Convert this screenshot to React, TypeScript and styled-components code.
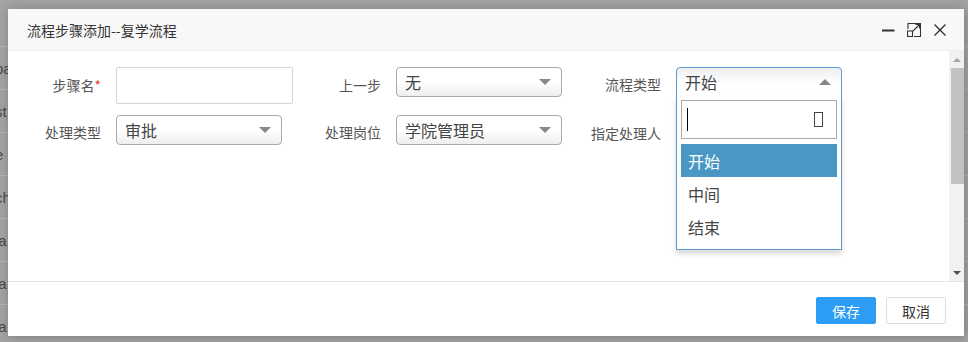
import React from "react";
import styled, { createGlobalStyle } from "styled-components";

const GlobalStyle = createGlobalStyle`
  html, body {
    margin: 0;
    padding: 0;
    background: #a3a3a3;
  }
  * {
    box-sizing: border-box;
  }
`;

const CJK = `"Noto Sans CJK SC", "Liberation Sans", sans-serif`;

const Page = styled.div`
  position: relative;
  width: 968px;
  height: 342px;
  overflow: hidden;
  background: #a3a3a3;
  font-family: ${CJK};
`;

const BackTable = styled.div`
  display: flex;
  flex-direction: column;
  padding-top: 4px;
`;

const BackRow = styled.div`
  height: 43px;
  border-bottom: 1px solid #b4b4b4;
  display: flex;
  align-items: center;
  padding-top: 0;
  font-family: "Liberation Sans", sans-serif;
  font-size: 15px;
  color: #4a4a4a;
`;

const BackText = styled.span`
  margin-left: -5px;
`;

const Dialog = styled.div`
  position: absolute;
  left: 8px;
  top: 9px;
  width: 956px;
  height: 327px;
  background: #fff;
  display: flex;
  flex-direction: column;
  box-shadow: 1px 1px 10px rgba(0, 0, 0, 0.25);
`;

const Header = styled.div`
  height: 42px;
  flex: none;
  display: flex;
  align-items: center;
  padding: 0 17px 0 19px;
  background: #f8f8f8;
  border-bottom: 1px solid #eee;
`;

const Title = styled.div`
  flex: 1;
  font-size: 14px;
  color: #333;
`;

const HeaderTools = styled.div`
  display: flex;
  align-items: center;
  gap: 12px;
`;

const ToolIcon = styled.svg`
  width: 14px;
  height: 14px;
  display: block;
  stroke: #333;
  fill: none;
`;

const Body = styled.div`
  height: 230px;
  flex: none;
  display: flex;
`;

const FormArea = styled.div`
  flex: 1;
  padding: 16px 0 0 8px;
`;

const FormGrid = styled.div`
  display: grid;
  grid-template-columns: repeat(3, 280px);
  row-gap: 11px;
  align-items: start;
`;

const Field = styled.div`
  display: flex;
  align-items: flex-start;
`;

const Label = styled.label<{ $h: number }>`
  width: 85px;
  margin-right: 15px;
  flex: none;
  text-align: right;
  font-size: 14px;
  line-height: ${({ $h }) => $h}px;
  color: #555;
  white-space: nowrap;
`;

const Required = styled.span`
  color: #e4393c;
`;

const TextInput = styled.div`
  width: 177px;
  height: 37px;
  border: 1px solid #d4d4d4;
  border-radius: 2px;
  background: #fff;
`;

const SelectBox = styled.div<{ $open?: boolean }>`
  position: relative;
  width: 166px;
  height: 30px;
  display: flex;
  align-items: center;
  padding: 0 10px 0 8px;
  border: 1px solid ${({ $open }) => ($open ? "#5d9bd0" : "#aaa")};
  border-radius: ${({ $open }) => ($open ? "4px 4px 0 0" : "4px")};
  background: ${({ $open }) =>
    $open
      ? "linear-gradient(to bottom, #eee 0%, #fff 55%)"
      : "linear-gradient(to bottom, #fff 50%, #eee 100%)"};
  font-size: 16px;
  color: #444;
`;

const SelectValue = styled.span`
  flex: 1;
  white-space: nowrap;
`;

const Caret = styled.span<{ $up?: boolean }>`
  width: 0;
  height: 0;
  border-left: 6px solid transparent;
  border-right: 6px solid transparent;
  ${({ $up }) =>
    $up ? "border-bottom: 6px solid #888;" : "border-top: 6px solid #888;"}
`;

const DropPanel = styled.div`
  position: absolute;
  top: 100%;
  left: -1px;
  right: -1px;
  background: #fff;
  border: 1px solid #5d9bd0;
  border-top: none;
  padding: 4px 4px 6px;
  box-shadow: 0 4px 5px rgba(0, 0, 0, 0.15);
  z-index: 2;
`;

const SearchBox = styled.div`
  height: 39px;
  border: 1px solid #aaa;
  display: flex;
  align-items: center;
  padding: 0 13px 0 5px;
  margin-bottom: 5px;
`;

const Cursor = styled.span`
  width: 1px;
  height: 23px;
  background: #000;
`;

const Tofu = styled.span`
  margin-left: auto;
  width: 9px;
  height: 15px;
  border: 1px solid #444;
`;

const Option = styled.div<{ $active?: boolean }>`
  height: 33px;
  display: flex;
  align-items: center;
  padding-left: 7px;
  font-size: 16px;
  color: ${({ $active }) => ($active ? "#fff" : "#444")};
  background: ${({ $active }) => ($active ? "#4a97c6" : "transparent")};
`;

const Scrollbar = styled.div`
  width: 15px;
  flex: none;
  background: #f1f1f1;
  display: flex;
  flex-direction: column;
  align-items: center;
`;

const ScrollArrow = styled.div<{ $down?: boolean }>`
  height: 17px;
  width: 100%;
  display: flex;
  align-items: center;
  justify-content: center;
  &::after {
    content: "";
    width: 0;
    height: 0;
    border-left: 4px solid transparent;
    border-right: 4px solid transparent;
    ${({ $down }) =>
      $down ? "border-top: 4px solid #505050;" : "border-bottom: 4px solid #a3a3a3;"}
  }
`;

const Thumb = styled.div`
  width: 13px;
  margin-left: 2px;
  height: 116px;
  background: #c1c1c1;
`;

const Spacer = styled.div`
  flex: 1;
`;

const Footer = styled.div`
  height: 55px;
  flex: none;
  border-top: 1px solid #e5e5e5;
  display: flex;
  justify-content: flex-end;
  align-items: flex-start;
  gap: 10px;
  padding: 15px 18px 0 0;
`;

const Button = styled.button<{ $primary?: boolean }>`
  width: 60px;
  height: 27px;
  padding: 0;
  font-family: ${CJK};
  font-size: 14px;
  border-radius: 2px;
  border: 1px solid ${({ $primary }) => ($primary ? "#2d9cf5" : "#dedede")};
  background: ${({ $primary }) => ($primary ? "#2d9cf5" : "#fff")};
  color: ${({ $primary }) => ($primary ? "#fff" : "#333")};
`;

type SelectProps = { value: string; open?: boolean; children?: React.ReactNode };

const Select = ({ value, open, children }: SelectProps) => (
  <SelectBox $open={open}>
    <SelectValue>{value}</SelectValue>
    <Caret $up={open} />
    {open && children}
  </SelectBox>
);

const backRows = ["", "pa", "st", "e", "ch", "la", "la", "la"];

export default function App() {
  return (
    <Page>
      <GlobalStyle />
      <BackTable>
        {backRows.map((t, i) => (
          <BackRow key={i}>
            <BackText>{t}</BackText>
          </BackRow>
        ))}
      </BackTable>
      <Dialog>
        <Header>
          <Title>流程步骤添加--复学流程</Title>
          <HeaderTools>
            <ToolIcon viewBox="0 0 14 14" strokeWidth={2}>
              <path d="M1 7.5H13.5" />
            </ToolIcon>
            <ToolIcon viewBox="0 0 14 14" strokeWidth={1.1}>
              <path d="M1 6V0.5H13.5V13.5H7" />
              <rect x="0.5" y="8" width="5" height="5.5" />
              <path d="M6 8L12.5 1.5M8.5 1.5H12.5V5.5" />
            </ToolIcon>
            <ToolIcon viewBox="0 0 14 14" strokeWidth={1.4}>
              <path d="M1.5 1.5L12.5 12.5M12.5 1.5L1.5 12.5" />
            </ToolIcon>
          </HeaderTools>
        </Header>
        <Body>
          <FormArea>
            <FormGrid>
              <Field>
                <Label $h={37}>
                  步骤名<Required>*</Required>
                </Label>
                <TextInput />
              </Field>
              <Field>
                <Label $h={36}>上一步</Label>
                <Select value="无" />
              </Field>
              <Field>
                <Label $h={35}>流程类型</Label>
                <Select value="开始" open>
                  <DropPanel>
                    <SearchBox>
                      <Cursor />
                      <Tofu />
                    </SearchBox>
                    <Option $active>开始</Option>
                    <Option>中间</Option>
                    <Option>结束</Option>
                  </DropPanel>
                </Select>
              </Field>
              <Field>
                <Label $h={35}>处理类型</Label>
                <Select value="审批" />
              </Field>
              <Field>
                <Label $h={35}>处理岗位</Label>
                <Select value="学院管理员" />
              </Field>
              <Field>
                <Label $h={36}>指定处理人</Label>
              </Field>
            </FormGrid>
          </FormArea>
          <Scrollbar>
            <ScrollArrow />
            <Thumb />
            <Spacer />
            <ScrollArrow $down />
          </Scrollbar>
        </Body>
        <Footer>
          <Button $primary>保存</Button>
          <Button>取消</Button>
        </Footer>
      </Dialog>
    </Page>
  );
}
